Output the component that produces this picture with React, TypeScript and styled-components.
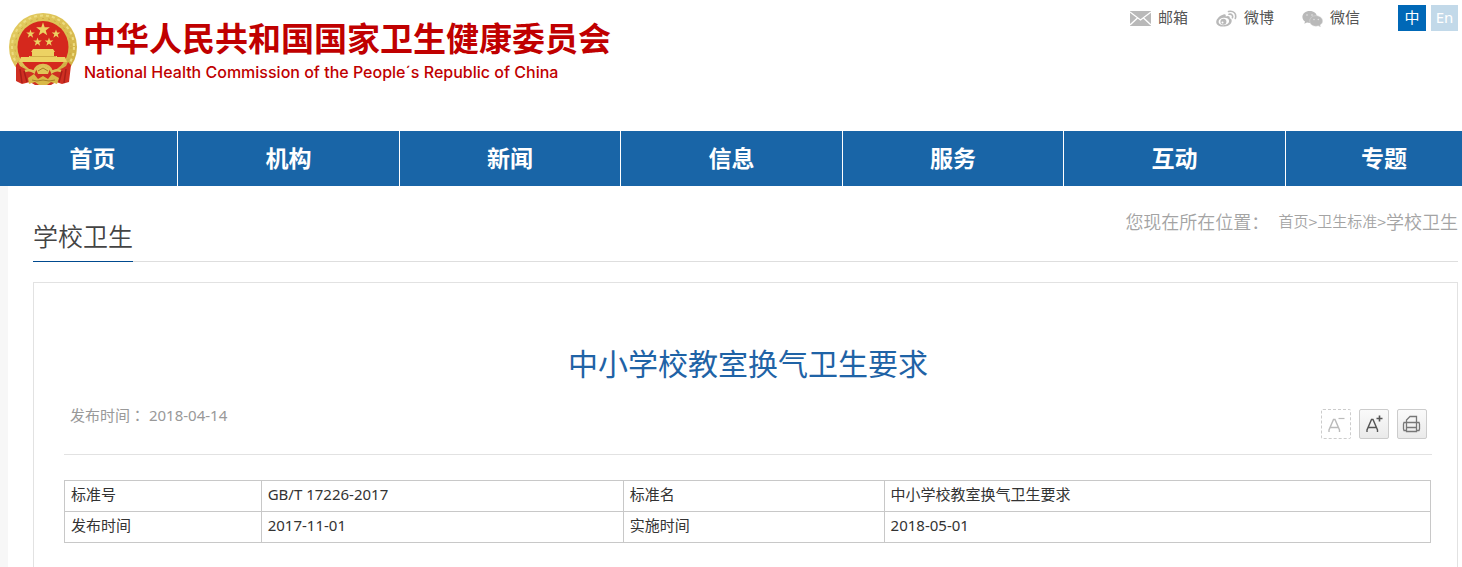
import React from "react";
import styled, { createGlobalStyle } from "styled-components";

const GlobalStyle = createGlobalStyle`
  * { box-sizing: border-box; }
  body {
    margin: 0;
    background: #fff;
    color: #333;
    font-family: "Noto Sans", "Noto Sans CJK SC", sans-serif;
    font-size: 15px;
    line-height: 20px;
  }
  a { color: inherit; text-decoration: none; }
  h1, h2, p { margin: 0; font-weight: 400; }
`;

const Page = styled.div`
  min-height: 100vh;
  display: flex;
  flex-direction: column;
`;

const Header = styled.header`
  display: flex;
  justify-content: space-between;
  align-items: flex-start;
  padding: 5px 4px 0 8px;
  height: 131px;
`;

const Brand = styled.a`
  display: flex;
  gap: 5px;
  padding-top: 6px;
  color: #c00000;
`;

const BrandText = styled.span`
  display: flex;
  flex-direction: column;
  padding-top: 6px;
`;

const BrandName = styled.span`
  font-family: "Noto Sans CJK SC", sans-serif;
  font-size: 33px;
  line-height: 40px;
  font-weight: 700;
  white-space: nowrap;
`;

const BrandSub = styled.span`
  padding-left: 1px;
  font-family: Inter, "Liberation Sans", sans-serif;
  font-size: 16px;
  line-height: 30px;
  font-weight: 500;
  white-space: nowrap;
`;

const Tools = styled.div`
  display: flex;
  align-items: center;
  gap: 28px;
`;

const ToolLink = styled.a`
  display: flex;
  align-items: center;
  gap: 7px;
  padding-bottom: 2px;
  color: #555;

  svg { margin-top: 3px; }
`;

const Languages = styled.div`
  display: flex;
  gap: 5px;
  margin-left: 10px;
`;

const LangButton = styled.button<{ $active?: boolean }>`
  width: ${(p) => (p.$active ? 28 : 27)}px;
  height: 26px;
  padding: 0 0 2px;
  border: 0;
  background: ${(p) => (p.$active ? "#0068b7" : "#c2d9e9")};
  color: #fff;
  font: inherit;
`;

const Nav = styled.nav`
  display: grid;
  grid-template-columns: 4fr repeat(5, 5fr) 4fr;
  background: #1965a7;
`;

const NavLink = styled.a`
  color: #fff;
  font-size: 23px;
  line-height: 55px;
  font-weight: 700;
  text-align: center;

  & + & { border-left: 1px solid #fff; }
  &:first-child { padding-left: 8px; }
  &:last-child { padding-left: 20px; }
`;

const Main = styled.main`
  flex: 1;
  display: flex;
  flex-direction: column;
  padding: 20px 4px 0 25px;
  border-left: 8px solid #f7f7f7;
`;

const SectionBar = styled.div`
  display: flex;
  justify-content: space-between;
  align-items: flex-start;
  margin-bottom: 20px;
  border-bottom: 1px solid #dedede;
`;

const SectionTitle = styled.h2`
  margin-bottom: -1px;
  padding: 12px 0 8px;
  border-bottom: 1px solid #004a8f;
  color: #444;
  font-family: "Noto Sans CJK SC", sans-serif;
  font-size: 25px;
  line-height: 35px;
  font-weight: 350;
`;

const Crumbs = styled.nav`
  display: flex;
  align-items: center;
  padding-top: 2px;
  color: #a4a4a4;
  font-family: "Noto Sans CJK SC", sans-serif;
  font-size: 18px;
  line-height: 26px;
  font-weight: 350;
`;

const CrumbLink = styled.a`
  font-size: 15px;
`;

const Separator = styled.span`
  font-size: 16px;
`;

const CrumbLabel = styled.span`
  margin-right: 9px;
`;

const Article = styled.article`
  flex: 1;
  padding: 60px 25px 24px 30px;
  border: 1px solid #e2e2e2;
  border-bottom: 0;
`;

const Title = styled.h1`
  color: #1f63a6;
  font-size: 30px;
  line-height: 42px;
  text-align: center;
`;

const Meta = styled.div`
  display: flex;
  justify-content: space-between;
  align-items: flex-start;
  height: 70px;
  margin-bottom: 25px;
  padding: 20px 5px 0 6px;
  border-bottom: 1px solid #e2e2e2;
  color: #999;
`;

const Published = styled.p`
  font-family: "Noto Sans", "Noto Sans CJK TC", sans-serif;
`;

const Actions = styled.div`
  display: flex;
  gap: 8px;
  padding-top: 4px;
`;

const ActionButton = styled.button<{ $muted?: boolean }>`
  display: flex;
  width: 30px;
  height: 30px;
  padding: 0;
  border: ${(p) => (p.$muted ? "1px dashed #ccc" : "1px solid #ccc")};
  border-radius: 2px;
  background: ${(p) => (p.$muted ? "#fff" : "linear-gradient(#fafafa, #eaeaea)")};
  color: ${(p) => (p.$muted ? "#bbb" : "#555")};
`;

const Table = styled.table`
  width: calc(100% - 1px);
  border-collapse: collapse;
  table-layout: fixed;
`;

const Cell = styled.td`
  height: 31px;
  padding: 3px 6px 7px;
  border: 1px solid #c8c8c8;
  text-align: left;
  font-weight: 400;
`;

const star = (cx: number, cy: number, r: number) =>
  Array.from({ length: 10 }, (_, i) => {
    const a = (Math.PI * i) / 5 - Math.PI / 2;
    const d = i % 2 ? r * 0.4 : r;
    return `${(cx + d * Math.cos(a)).toFixed(2)},${(cy + d * Math.sin(a)).toFixed(2)}`;
  }).join(" ");

const Emblem = () => (
  <svg width="70" height="76" viewBox="0 0 70 76" aria-hidden="true">
    <defs>
      <linearGradient id="gold" x1="0" y1="0" x2="1" y2="1">
        <stop offset="0" stopColor="#e3cd62" />
        <stop offset=".5" stopColor="#dcc055" />
        <stop offset="1" stopColor="#cbaa3c" />
      </linearGradient>
    </defs>
    <ellipse cx="35" cy="36" rx="34" ry="34" fill="url(#gold)" />
    <ellipse cx="35" cy="36" rx="31" ry="31.500" fill="none" stroke="#eddc80" strokeWidth="2" strokeDasharray="3 3" />
    <ellipse cx="35" cy="36" rx="28" ry="28.500" fill="none" stroke="#c9a843" strokeDasharray="2 4" />
    <ellipse cx="35" cy="36" rx="25.500" ry="26" fill="#d5281d" />
    <path d="M10 51 12 55 Q22 62 35 60 Q49 62 58 55L60 51 63 54 61 71 54 73 48 71 43 74H27L22 71 14 73 8 70 8 54Z" fill="#cf2f22" />
    <path d="M12 58 14 72M16 60 19 71M54 60 51 71M58 58 56 72" stroke="#a91f18" strokeWidth="1.500" />
    <g fill="#ecd263">
      <polygon points={star(35, 18.5, 7.2)} />
      <polygon points={star(22.5, 23, 4.5)} />
      <polygon points={star(48, 23, 4.5)} />
      <polygon points={star(29.5, 31, 4.5)} />
      <polygon points={star(41, 31, 4.5)} />
      <path d="M25 38H45L47 41H23ZM24 41H46V45H49V46H57L59 51H11L13 46H21V45H24Z" />
    </g>
    <path d="M22 45.500H48" stroke="#c8a640" strokeWidth=".8" />
    <path d="M17 60Q22 58 26 61 28 54 35 54 42 54 44 61 48 58 53 60" fill="none" stroke="#dcc055" strokeWidth="2.500" />
    <path d="M28 58Q35 51 42 58L40 63H30Z" fill="#e0c557" />
    <path d="M20 67 26 63 30 68 35 65 40 68 44 63 51 67 49 73 43 71 39 74H31L27 71 21 73Z" fill="#d9b947" />
    <path d="M30 60 35 57 40 60M24 69 29 70 35 69 41 70 47 69" fill="none" stroke="#a97d25" />
  </svg>
);

const MailIcon = () => (
  <svg width="21" height="15" viewBox="0 0 21 15" aria-hidden="true">
    <rect width="21" height="15" fill="#b9b9b9" />
    <path d="M0 1 10.500 9 21 1M0 14 7.500 7M21 14 13.500 7" fill="none" stroke="#fff" strokeWidth="1.300" />
  </svg>
);

const WeiboIcon = () => (
  <svg width="21" height="17" viewBox="0 0 21 17" aria-hidden="true">
    <path d="M7.500 4.500C9.500 4 10.200 5 9.600 6.600 12 5.600 14.200 6 13.700 8.200 15.500 8.800 16 10 15.600 11.700 14.600 15 11 16.600 7.500 16.600 3.500 16.600.2 14.900.2 11.900.2 8.900 4.300 5.200 7.500 4.500Z" fill="#b9b9b9" />
    <ellipse cx="7.800" cy="11.400" rx="5.300" ry="3.700" fill="#fff" transform="rotate(-8 8 11)" />
    <circle cx="7.400" cy="11.700" r="3" fill="#b9b9b9" />
    <circle cx="6.500" cy="12.400" r="1" fill="#fff" />
    <path d="M12.500 1.500C17.500.2 20.900 4 19.300 8.500M13 4.300C15.700 3.700 17.200 5.500 16.400 7.700" fill="none" stroke="#b9b9b9" strokeWidth="1.600" strokeLinecap="round" />
  </svg>
);

const WechatIcon = () => (
  <svg width="21" height="17" viewBox="0 0 21 17" aria-hidden="true">
    <path d="M7.700 1C3.500 1 .4 3.600.4 7 .4 8.900 1.400 10.500 3 11.600L2.300 13.800 5 12.500 7.700 13C12 13 15 10.400 15 7S12 1 7.700 1Z" fill="#b9b9b9" />
    <path d="M14 5.700C10.300 5.700 7.700 8 7.700 11S10.300 16.200 14 16.200L16.300 15.800 18.500 17 18 15.100C19.700 14.100 20.600 12.700 20.600 11 20.600 8 17.700 5.700 14 5.700Z" fill="#b9b9b9" stroke="#ddd" strokeWidth=".5" />
    <g fill="#e4e4e4"><circle cx="5" cy="5" r=".8" /><circle cx="10" cy="5" r=".8" /><circle cx="12" cy="9.500" r=".7" /><circle cx="16.300" cy="9.500" r=".7" /></g>
  </svg>
);

const FontIcon = ({ plus }: { plus?: boolean }) => (
  <svg width="28" height="28" viewBox="0 0 28 28" fill="none" stroke="currentColor" aria-hidden="true">
    <path d="M7 22V20L11.500 9.500H13L17.500 20V22M8.500 17.500H16" strokeWidth="1.400" />
    <path d={plus ? "M16.500 8.500H22.500M19.500 5.500V11.500" : "M16.500 8.500H22.500"} strokeWidth={plus ? 1.6 : 1.2} />
  </svg>
);

const PrintIcon = () => (
  <svg width="28" height="28" viewBox="0 0 28 28" fill="none" stroke="#777" strokeWidth="1.300" aria-hidden="true">
    <path d="M8.500 12V10L12 6.500H18.500V12M8.500 12.500H18.500V21.500H8.500ZM8.500 17.500H18.500M8.500 12.500H6L5.500 14V19L6 20.500H8.500M18.500 12.500H21L21.500 14V19L21 20.500H18.500" />
  </svg>
);

const sections = ["首页", "机构", "新闻", "信息", "服务", "互动", "专题"];

const rows = [
  ["标准号", "GB/T 17226-2017", "标准名", "中小学校教室换气卫生要求"],
  ["发布时间", "2017-11-01", "实施时间", "2018-05-01"],
];

export default function App() {
  return (
    <Page>
      <GlobalStyle />
      <Header>
        <Brand href="#">
          <Emblem />
          <BrandText>
            <BrandName>中华人民共和国国家卫生健康委员会</BrandName>
            <BrandSub>National Health Commission of the People´s Republic of China</BrandSub>
          </BrandText>
        </Brand>
        <Tools>
          <ToolLink href="#"><MailIcon />邮箱</ToolLink>
          <ToolLink href="#"><WeiboIcon />微博</ToolLink>
          <ToolLink href="#"><WechatIcon />微信</ToolLink>
          <Languages>
            <LangButton type="button" $active>中</LangButton>
            <LangButton type="button">En</LangButton>
          </Languages>
        </Tools>
      </Header>
      <Nav>
        {sections.map((s) => <NavLink href="#" key={s}>{s}</NavLink>)}
      </Nav>
      <Main>
        <SectionBar>
          <SectionTitle>学校卫生</SectionTitle>
          <Crumbs>
            <CrumbLabel>您现在所在位置：</CrumbLabel>
            <CrumbLink href="#">首页</CrumbLink>
            <Separator>&gt;</Separator>
            <CrumbLink href="#">卫生标准</CrumbLink>
            <Separator>&gt;</Separator>
            <span>学校卫生</span>
          </Crumbs>
        </SectionBar>
        <Article>
          <Title>中小学校教室换气卫生要求</Title>
          <Meta>
            <Published>发布时间： <time>2018-04-14</time></Published>
            <Actions>
              <ActionButton type="button" $muted aria-label="缩小字体"><FontIcon /></ActionButton>
              <ActionButton type="button" aria-label="放大字体"><FontIcon plus /></ActionButton>
              <ActionButton type="button" aria-label="打印"><PrintIcon /></ActionButton>
            </Actions>
          </Meta>
          <Table>
            <colgroup>
              <col width="14.4%" />
              <col width="26.5%" />
              <col width="19.1%" />
              <col width="40%" />
            </colgroup>
            <tbody>
              {rows.map((r) => (
                <tr key={r[0]}>
                  {r.map((c, i) => (
                    <Cell key={c} as={i % 2 ? "td" : "th"}>{c}</Cell>
                  ))}
                </tr>
              ))}
            </tbody>
          </Table>
        </Article>
      </Main>
    </Page>
  );
}
